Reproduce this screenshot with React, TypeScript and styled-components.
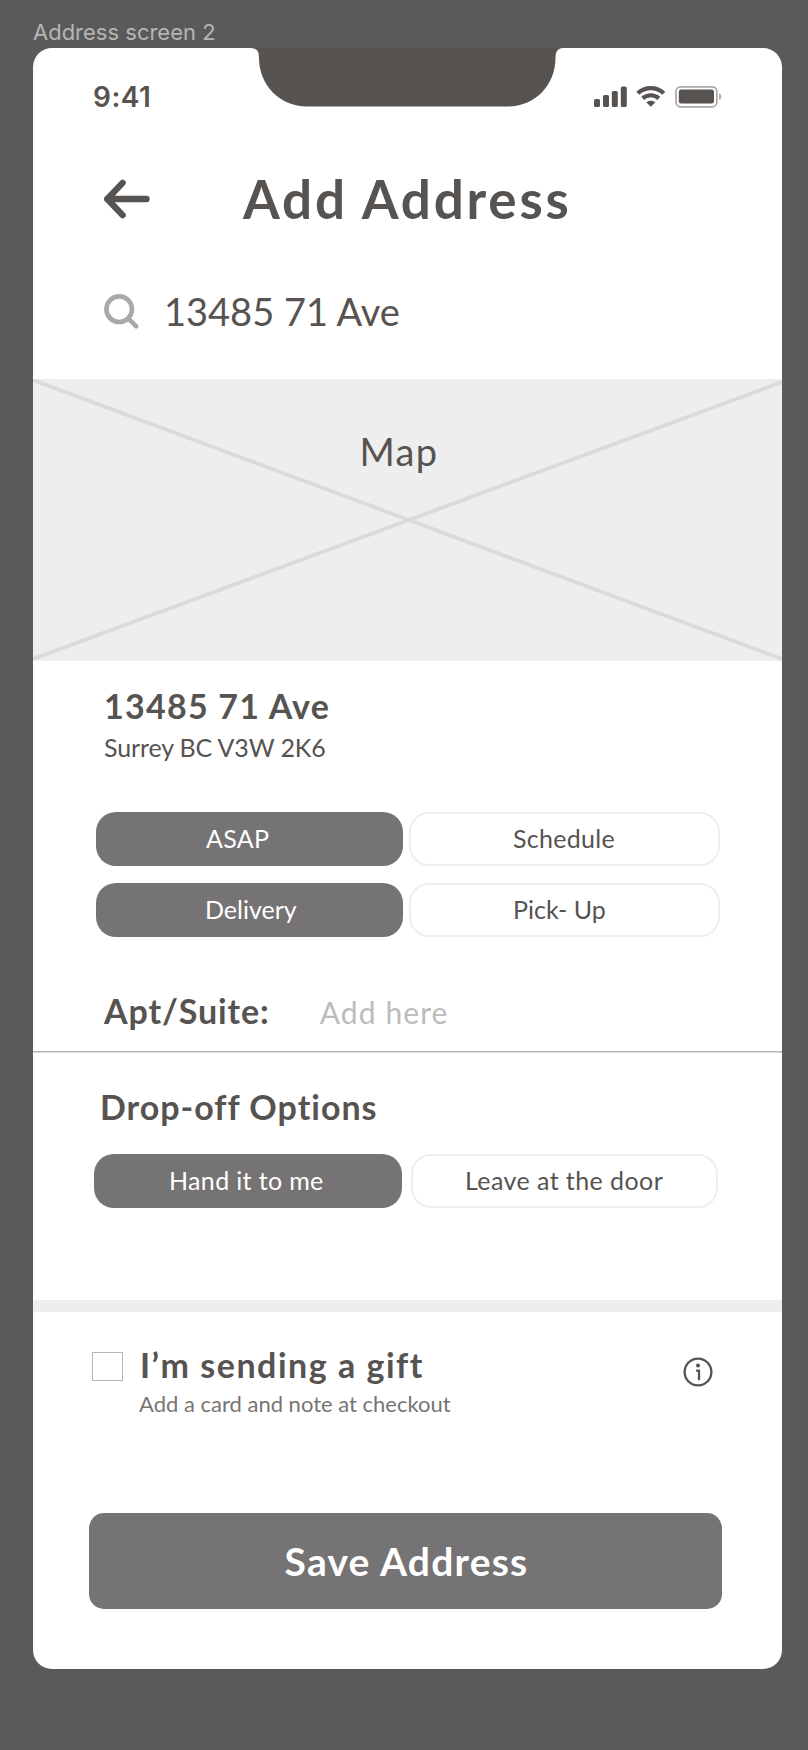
import React from 'react';
import styled, { createGlobalStyle } from 'styled-components';

const ink = '#575351';
const fill = '#757373';
const pale = '#eeeeee';

const GlobalStyle = createGlobalStyle`
  *, *::before, *::after { box-sizing: border-box; }
  body { margin: 0; background: #5a5a5a; }
`;

const Canvas = styled.main`
  width: 808px;
  height: 1750px;
  padding: 17px 0 0 33px;
  background: #5a5a5a;
  color: ${ink};
  font-family: Lato, 'Liberation Sans', sans-serif;
  font-variant-ligatures: none;
`;

const FrameLabel = styled.div`
  height: 31px;
  font: 400 22px/30px Inter, sans-serif;
  color: #b5b5b5;
`;

const Phone = styled.div`
  position: relative;
  display: flex;
  flex-direction: column;
  width: 749px;
  height: 1621px;
  border-radius: 19px;
  background: #fff;
  overflow: hidden;
`;

const Notch = styled.svg`
  position: absolute;
  top: 0;
  left: 218px;
`;

const StatusBar = styled.div`
  display: flex;
  justify-content: space-between;
  align-items: flex-start;
  height: 82px;
  padding: 33px 59px 0 60px;
`;

const Time = styled.span`
  padding-top: 1px;
  font: 600 28px/30px Inter, sans-serif;
  letter-spacing: 0.5px;
`;

const StatusIcons = styled.svg`
  margin-top: 4px;
`;

const TitleRow = styled.header`
  display: flex;
  align-items: center;
  height: 132px;
  padding: 5px 0 0 70px;
`;

const Text = styled.span<{ $size: number; $line: number; $weight?: number; $track?: number; $color?: string }>`
  display: block;
  white-space: nowrap;
  font-family: Lato, 'Liberation Sans', sans-serif;
  font-size: ${p => p.$size}px;
  line-height: ${p => p.$line}px;
  font-weight: ${p => p.$weight ?? 400};
  letter-spacing: ${p => p.$track ?? 0}px;
  color: ${p => p.$color ?? ink};
`;

const Title = styled(Text).attrs({ as: 'h1' })`
  margin: 0 0 0 92px;
  padding-top: 1px;
`;

const SearchRow = styled.div`
  display: flex;
  align-items: center;
  gap: 25px;
  height: 117px;
  padding: 0 0 19px 70px;
`;

const MapBox = styled.div`
  position: relative;
  display: flex;
  justify-content: center;
  align-items: flex-start;
  height: 282px;
  padding: 49px 17px 0 0;
  background: ${pale};
`;

const MapCross = styled.svg`
  position: absolute;
  inset: 0;
`;

const MapLabel = styled(Text)`
  position: relative;
`;

const Place = styled.section`
  display: flex;
  flex-direction: column;
  gap: 5px;
  padding: 24px 0 50px 71px;
`;

const Choices = styled.div<{ $inset: number; $cols: string; $gap: number }>`
  display: grid;
  grid-template-columns: ${p => p.$cols};
  gap: 17px ${p => p.$gap}px;
  padding-left: ${p => p.$inset}px;
`;

const Choice = styled.button<{ $on?: boolean; $indent: number; $track?: number }>`
  height: 54px;
  padding: 0 0 1px ${p => p.$indent - (p.$on ? 0 : 2)}px;
  border: ${p => (p.$on ? 'none' : `2px solid ${pale}`)};
  border-radius: 20px;
  background: ${p => (p.$on ? fill : '#fff')};
  color: ${p => (p.$on ? '#fff' : ink)};
  font: 400 25px/1 Lato, 'Liberation Sans', sans-serif;
  letter-spacing: ${p => p.$track ?? 0}px;
  text-align: left;
  white-space: nowrap;
`;

const UnitRow = styled.div`
  display: flex;
  align-items: baseline;
  gap: 50px;
  height: 115px;
  padding: 53px 0 0 71px;
  border-bottom: 1px solid #b5b5b5;
  box-shadow: 0 1px #dcdcdc;
`;

const DropOff = styled.section`
  display: flex;
  flex-direction: column;
  gap: 26px;
  height: 248px;
  padding-top: 34px;
`;

const SectionTitle = styled(Text).attrs({ as: 'h2' })`
  margin: 0 0 0 67px;
`;

const Band = styled.div`
  height: 12px;
  background: ${pale};
`;

const GiftRow = styled.section`
  display: flex;
  align-items: flex-start;
  height: 201px;
  padding: 32px 69px 0 59px;
`;

const CheckBox = styled.span`
  width: 31px;
  height: 29px;
  margin-top: 8px;
  border: 1px solid #b5b5b5;
`;

const GiftText = styled.div`
  display: flex;
  flex-direction: column;
  flex: 1;
  gap: 5px;
  padding-left: 16px;
`;

const GiftTitle = styled(Text)`
  padding-left: 1px;
`;

const InfoIcon = styled.svg`
  margin-top: 13px;
`;

const SaveButton = styled.button`
  width: 633px;
  height: 96px;
  margin-left: 56px;
  padding: 0 0 0 2px;
  border: none;
  border-radius: 15px;
  background: ${fill};
`;

const SaveLabel = styled(Text)`
  text-align: center;
`;

export default function App() {
  return (
    <Canvas>
      <GlobalStyle />
      <FrameLabel>Address screen 2</FrameLabel>
      <Phone>
        <Notch width="312" height="59" viewBox="0 0 312 59">
          <path d="M0 0H312C307 0.5 304.5 3 304.5 10C304.5 37 284 58.5 257 58.5H56C29 58.5 8 37 8 10C8 3 6 0.5 0 0Z" fill={ink} />
        </Notch>
        <StatusBar>
          <Time>9:41</Time>
          <StatusIcons width="129" height="24" viewBox="0 0 129 24">
            <g fill={ink}>
              <rect x="0" y="14" width="6" height="8" rx="1.6" />
              <rect x="9" y="10" width="6" height="12" rx="1.6" />
              <rect x="17.8" y="6" width="6" height="16" rx="1.6" />
              <rect x="26.8" y="1.4" width="6" height="20.6" rx="1.6" />
              <path d="M56.8 21.8 52.2 17.2C54.8 15.1 58.8 15.1 61.4 17.2Z" />
              <rect x="84.8" y="4.6" width="35.2" height="14" rx="2.4" />
            </g>
            <g fill="none" stroke={ink} strokeWidth="4.2">
              <path d="M43.8 8.2C51 1.3 62.6 1.3 69.8 8.2" />
              <path d="M48.7 13.4C53.2 9.2 60.4 9.2 64.9 13.4" />
            </g>
            <rect x="82" y="1.8" width="40.8" height="20" rx="4.6" fill="none" stroke="#aaa8a7" strokeWidth="1.7" />
            <path d="M125 8.2C128.2 9.2 128.2 14 125 15Z" fill="#b5b3b2" />
          </StatusIcons>
        </StatusBar>
        <TitleRow>
          <svg width="48" height="40" viewBox="0 0 48 40" fill="none" stroke={ink} strokeWidth="6.4" strokeLinecap="round" strokeLinejoin="round">
            <path d="M19.6 3.9 4.3 20 19.6 36.1M4.3 20H43.5" />
          </svg>
          <Title $size={53} $line={64} $weight={700} $track={2.8}>Add Address</Title>
        </TitleRow>
        <SearchRow>
          <svg width="36" height="36" viewBox="0 0 36 36" fill="none" stroke="#a9a9a9" strokeWidth="4.6">
            <circle cx="16.2" cy="16.2" r="12.8" />
            <path d="M26 26.1 33.2 33.3" strokeLinecap="round" />
          </svg>
          <Text $size={38} $line={46}>13485 71 Ave</Text>
        </SearchRow>
        <MapBox>
          <MapCross width="749" height="282" viewBox="0 0 749 282" stroke="#dadada" strokeWidth="3.8">
            <path d="M0 1 749 280M0 280 749 3" />
          </MapCross>
          <MapLabel $size={38} $line={46} $track={1.4}>Map</MapLabel>
        </MapBox>
        <Place>
          <Text $size={34} $line={42} $weight={700} $track={1.25}>13485 71 Ave</Text>
          <Text $size={25} $line={30} $track={-0.13}>Surrey BC V3W 2K6</Text>
        </Place>
        <Choices $inset={63} $cols="307px 311px" $gap={6}>
          <Choice $on $indent={110} $track={0.3}>ASAP</Choice>
          <Choice $indent={104} $track={0.3}>Schedule</Choice>
          <Choice $on $indent={109}>Delivery</Choice>
          <Choice $indent={104}>Pick- Up</Choice>
        </Choices>
        <UnitRow>
          <Text $size={34} $line={42} $weight={700} $track={0.9}>Apt/Suite:</Text>
          <Text $size={30} $line={42} $track={1.1} $color="#bcbcbc">Add here</Text>
        </UnitRow>
        <DropOff>
          <SectionTitle $size={34} $line={42} $weight={700} $track={1}>Drop-off Options</SectionTitle>
          <Choices $inset={61} $cols="308px 307px" $gap={9}>
            <Choice $on $indent={75} $track={0.35}>Hand it to me</Choice>
            <Choice $indent={54} $track={0.42}>Leave at the door</Choice>
          </Choices>
        </DropOff>
        <Band />
        <GiftRow>
          <CheckBox />
          <GiftText>
            <GiftTitle $size={34} $line={42} $weight={700} $track={1.5}>I’m sending a gift</GiftTitle>
            <Text $size={22} $line={26} $color="#777574">Add a card and note at checkout</Text>
          </GiftText>
          <InfoIcon width="30" height="30" viewBox="0 0 30 30" fill="none" stroke={ink} strokeWidth="2.3" strokeLinecap="round" strokeLinejoin="round">
            <circle cx="15" cy="15" r="13.4" />
            <path d="M14 13.7H16V22.3" />
            <circle cx="15" cy="8.4" r="2" fill={ink} stroke="none" />
          </InfoIcon>
        </GiftRow>
        <SaveButton>
          <SaveLabel $size={39} $line={96} $weight={700} $track={1.2} $color="#fff">Save Address</SaveLabel>
        </SaveButton>
      </Phone>
    </Canvas>
  );
}
